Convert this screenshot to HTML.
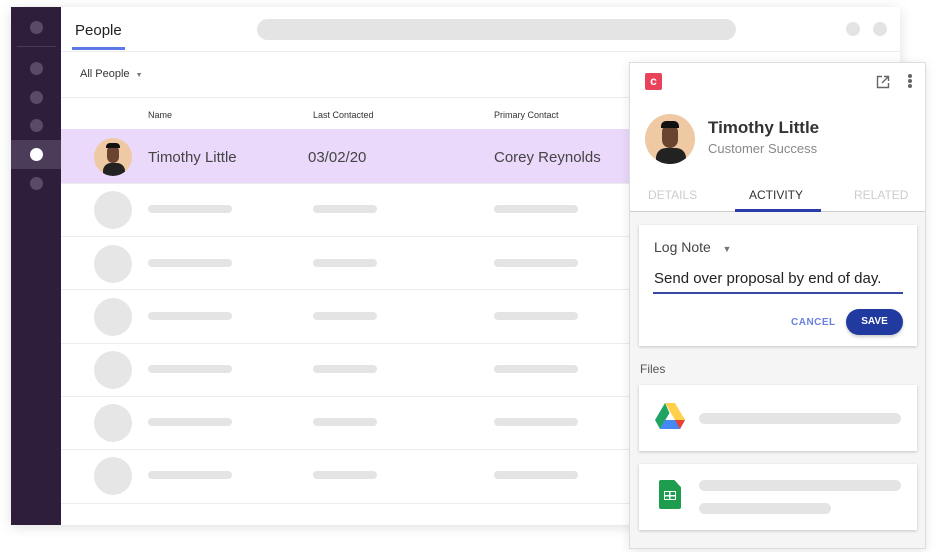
<!DOCTYPE html>
<html><head><meta charset="utf-8"><style>
*{box-sizing:border-box;margin:0;padding:0}
body{width:947px;height:552px;background:#fff;font-family:"Liberation Sans",Arial,sans-serif;position:relative;overflow:hidden}
.abs{position:absolute}
.win{left:11px;top:7px;width:889px;height:518px;background:#fff;box-shadow:0 2px 12px rgba(0,0,0,.12)}
.side{left:11px;top:7px;width:50px;height:518px;background:#2e1e3c}
.dot{position:absolute;width:13px;height:13px;border-radius:50%;background:#5a4a68;left:19px}
.bar{position:absolute;height:8px;border-radius:4px;background:#e4e4e4}
.circ{position:absolute;width:38px;height:38px;border-radius:50%;background:#e6e6e6;left:94px}
.hl{position:absolute;left:61px;width:839px;height:1px;background:#ececec}
.avatar{position:absolute;border-radius:50%;background:#eec9a3;overflow:hidden}
</style></head><body>
<div class="abs win"></div>
<div class="abs side"></div>
<div class="dot" style="left:30px;top:21px"></div>
<div class="abs" style="left:17px;top:46px;width:39px;height:1px;background:#4a3a58"></div>
<div class="dot" style="left:30px;top:62px"></div>
<div class="dot" style="left:30px;top:91px"></div>
<div class="dot" style="left:30px;top:119px"></div>
<div class="abs" style="left:11px;top:140px;width:50px;height:29px;background:#4b3c5a"></div>
<div class="dot" style="left:30px;top:148px;background:#fff"></div>
<div class="dot" style="left:30px;top:177px"></div>

<div class="abs" style="left:75px;top:22px;font-size:15px;color:#222">People</div>
<div class="abs" style="left:72px;top:47px;width:53px;height:3px;background:#5b78e6"></div>
<div class="hl" style="top:51px"></div>
<div class="abs" style="left:257px;top:19px;width:479px;height:21px;border-radius:11px;background:#e4e4e4"></div>
<div class="abs" style="left:846px;top:22px;width:14px;height:14px;border-radius:50%;background:#e4e4e4"></div>
<div class="abs" style="left:873px;top:22px;width:14px;height:14px;border-radius:50%;background:#e4e4e4"></div>
<div class="abs" style="left:80px;top:68px;font-size:11px;color:#333">All People &nbsp;<span style="font-size:7px;color:#777">▼</span></div>
<div class="hl" style="top:97px"></div>
<div class="abs" style="left:148px;top:110px;font-size:9px;color:#333">Name</div>
<div class="abs" style="left:313px;top:110px;font-size:9px;color:#333">Last Contacted</div>
<div class="abs" style="left:494px;top:110px;font-size:9px;color:#333">Primary Contact</div>
<div class="abs" style="left:61px;top:129px;width:839px;height:54px;background:#ead9fb"></div>
<div class="avatar" style="left:94px;top:138px;width:38px;height:38px"><div style="position:absolute;left:9px;top:25px;width:22px;height:16px;border-radius:8px 8px 0 0;background:#222"></div><div style="position:absolute;left:13px;top:7px;width:12px;height:18px;border-radius:6px;background:#6b4430"></div><div style="position:absolute;left:12px;top:5px;width:14px;height:5px;border-radius:4px 4px 0 0;background:#111"></div></div>
<div class="abs" style="left:148px;top:149px;font-size:15px;color:#444">Timothy Little</div>
<div class="abs" style="left:308px;top:149px;font-size:15px;color:#444">03/02/20</div>
<div class="abs" style="left:494px;top:149px;font-size:15px;color:#444">Corey Reynolds</div>
<div class="hl" style="top:183px"></div>
<div class="hl" style="top:236px"></div>
<div class="hl" style="top:289px"></div>
<div class="hl" style="top:343px"></div>
<div class="hl" style="top:396px"></div>
<div class="hl" style="top:449px"></div>
<div class="hl" style="top:503px"></div>

<div class="circ" style="top:191px"></div><div class="bar" style="left:148px;top:205px;width:84px"></div><div class="bar" style="left:313px;top:205px;width:64px"></div><div class="bar" style="left:494px;top:205px;width:84px"></div>
<div class="circ" style="top:245px"></div><div class="bar" style="left:148px;top:259px;width:84px"></div><div class="bar" style="left:313px;top:259px;width:64px"></div><div class="bar" style="left:494px;top:259px;width:84px"></div>
<div class="circ" style="top:298px"></div><div class="bar" style="left:148px;top:312px;width:84px"></div><div class="bar" style="left:313px;top:312px;width:64px"></div><div class="bar" style="left:494px;top:312px;width:84px"></div>
<div class="circ" style="top:351px"></div><div class="bar" style="left:148px;top:365px;width:84px"></div><div class="bar" style="left:313px;top:365px;width:64px"></div><div class="bar" style="left:494px;top:365px;width:84px"></div>
<div class="circ" style="top:404px"></div><div class="bar" style="left:148px;top:418px;width:84px"></div><div class="bar" style="left:313px;top:418px;width:64px"></div><div class="bar" style="left:494px;top:418px;width:84px"></div>
<div class="circ" style="top:457px"></div><div class="bar" style="left:148px;top:471px;width:84px"></div><div class="bar" style="left:313px;top:471px;width:64px"></div><div class="bar" style="left:494px;top:471px;width:84px"></div>

<div class="abs" style="left:629px;top:62px;width:297px;height:487px;background:#f5f5f5;border:1px solid #ddd;box-shadow:0 2px 10px rgba(0,0,0,.1)"></div>
<div class="abs" style="left:630px;top:63px;width:295px;height:149px;background:#fff;border-bottom:1px solid #ccc"></div>
<div class="abs" style="left:645px;top:73px;width:17px;height:17px;border-radius:2px;background:#e8435a;color:#fff;font-size:12px;font-weight:bold;text-align:center;line-height:17px">c</div>
<svg class="abs" style="left:876px;top:75px" width="14" height="14" viewBox="0 0 14 14"><path d="M6 1.5H1.5v11h11V8M8 1.5h4.5V6M12.5 1.5L6 8" fill="none" stroke="#666" stroke-width="1.4"/></svg>
<div class="abs" style="left:908px;top:74px;width:4px;height:4px;border-radius:50%;background:#666;box-shadow:0 5px 0 #666,0 10px 0 #666"></div>
<div class="avatar" style="left:645px;top:114px;width:50px;height:50px"><div style="position:absolute;left:11px;top:34px;width:30px;height:20px;border-radius:10px 10px 0 0;background:#222"></div><div style="position:absolute;left:17px;top:10px;width:16px;height:24px;border-radius:8px;background:#6b4430"></div><div style="position:absolute;left:16px;top:7px;width:18px;height:7px;border-radius:5px 5px 0 0;background:#111"></div></div>
<div class="abs" style="left:708px;top:118px;font-size:17px;font-weight:bold;color:#333">Timothy Little</div>
<div class="abs" style="left:708px;top:141px;font-size:13px;color:#888">Customer Success</div>
<div class="abs" style="left:648px;top:188px;font-size:12px;color:#ccc">DETAILS</div>
<div class="abs" style="left:749px;top:188px;font-size:12px;color:#333">ACTIVITY</div>
<div class="abs" style="left:854px;top:188px;font-size:12px;color:#ccc">RELATED</div>
<div class="abs" style="left:735px;top:209px;width:86px;height:3px;background:#2a3ca8"></div>

<div class="abs" style="left:639px;top:225px;width:278px;height:121px;background:#fff;box-shadow:0 1px 3px rgba(0,0,0,.2)"></div>
<div class="abs" style="left:654px;top:239px;font-size:14px;color:#444">Log Note &nbsp;&nbsp;<span style="font-size:9px;color:#777">▼</span></div>
<div class="abs" style="left:654px;top:270px;font-size:15px;color:#222">Send over proposal by end of day.</div>
<div class="abs" style="left:653px;top:292px;width:250px;height:2px;background:#3848a8"></div>
<div class="abs" style="left:791px;top:317px;font-size:10px;font-weight:bold;color:#6a7fe0;letter-spacing:.5px">CANCEL</div>
<div class="abs" style="left:846px;top:309px;width:57px;height:26px;border-radius:13px;background:#213aa0;color:#fff;font-size:10px;font-weight:bold;text-align:center;line-height:26px;box-shadow:0 2px 3px rgba(0,0,0,.2)">SAVE</div>
<div class="abs" style="left:640px;top:362px;font-size:12px;color:#555">Files</div>

<div class="abs" style="left:639px;top:385px;width:278px;height:66px;background:#fff;box-shadow:0 1px 3px rgba(0,0,0,.2)"></div>
<svg class="abs" style="left:655px;top:403px" width="30" height="27" viewBox="0 0 30 27"><path d="M10 0l-10 17 5 9 9.5-16z" fill="#1fa463"/><path d="M10 0h10l10 17h-10z" fill="#ffd04b"/><path d="M5 26l5-9h20l-5 9z" fill="#4688f4"/><path d="M30 17h-10l5 9z" fill="#e94235"/></svg>
<div class="bar" style="left:699px;top:413px;width:202px;height:11px;border-radius:6px"></div>

<div class="abs" style="left:639px;top:464px;width:278px;height:66px;background:#fff;box-shadow:0 1px 3px rgba(0,0,0,.2)"></div>
<div class="abs" style="left:659px;top:480px;width:22px;height:29px;background:#1f9d4f;border-radius:2px;clip-path:polygon(0 0,70% 0,100% 25%,100% 100%,0 100%)"></div>
<div class="abs" style="left:664px;top:491px;width:12px;height:9px;border:1.5px solid #fff;background:linear-gradient(#fff,#fff) center/1.5px 100% no-repeat,linear-gradient(#fff,#fff) center/100% 1.5px no-repeat"></div>
<div class="bar" style="left:699px;top:480px;width:202px;height:11px;border-radius:6px"></div>
<div class="bar" style="left:699px;top:503px;width:132px;height:11px;border-radius:6px"></div>
</body></html>
